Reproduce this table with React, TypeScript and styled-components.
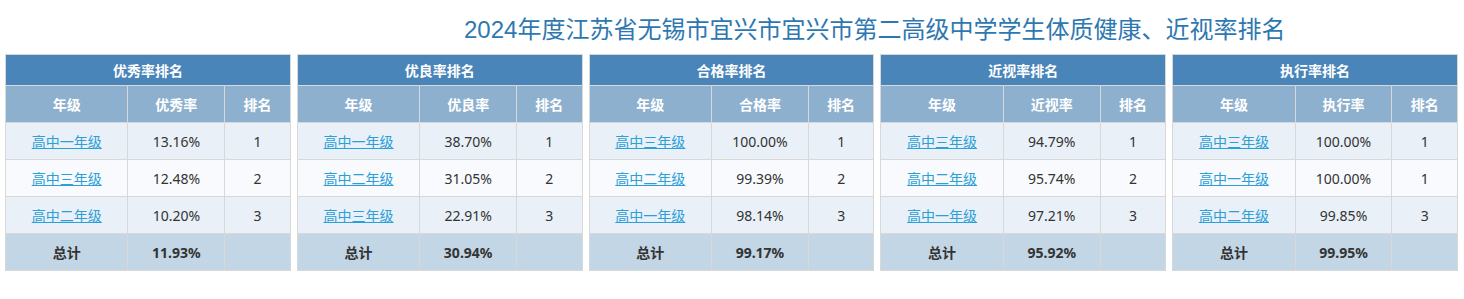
import React from "react";
import styled, { createGlobalStyle } from "styled-components";

type Row = { grade: string; rate: string; rank: string };
type Board = { title: string; rateLabel: string; rows: Row[]; total: string };

const boards: Board[] = [
  {
    title: "优秀率排名",
    rateLabel: "优秀率",
    rows: [
      { grade: "高中一年级", rate: "13.16%", rank: "1" },
      { grade: "高中三年级", rate: "12.48%", rank: "2" },
      { grade: "高中二年级", rate: "10.20%", rank: "3" },
    ],
    total: "11.93%",
  },
  {
    title: "优良率排名",
    rateLabel: "优良率",
    rows: [
      { grade: "高中一年级", rate: "38.70%", rank: "1" },
      { grade: "高中二年级", rate: "31.05%", rank: "2" },
      { grade: "高中三年级", rate: "22.91%", rank: "3" },
    ],
    total: "30.94%",
  },
  {
    title: "合格率排名",
    rateLabel: "合格率",
    rows: [
      { grade: "高中三年级", rate: "100.00%", rank: "1" },
      { grade: "高中二年级", rate: "99.39%", rank: "2" },
      { grade: "高中一年级", rate: "98.14%", rank: "3" },
    ],
    total: "99.17%",
  },
  {
    title: "近视率排名",
    rateLabel: "近视率",
    rows: [
      { grade: "高中三年级", rate: "94.79%", rank: "1" },
      { grade: "高中二年级", rate: "95.74%", rank: "2" },
      { grade: "高中一年级", rate: "97.21%", rank: "3" },
    ],
    total: "95.92%",
  },
  {
    title: "执行率排名",
    rateLabel: "执行率",
    rows: [
      { grade: "高中三年级", rate: "100.00%", rank: "1" },
      { grade: "高中一年级", rate: "100.00%", rank: "1" },
      { grade: "高中二年级", rate: "99.85%", rank: "3" },
    ],
    total: "99.95%",
  },
];

const App = () => {
  return (
    <Page>
      <GlobalStyle />
      <Heading>2024年度江苏省无锡市宜兴市宜兴市第二高级中学学生体质健康、近视率排名</Heading>
      <Boards>
        {boards.map((b) => (
          <Table key={b.title}>
            <colgroup>
              <col style={{ width: "43%" }} />
              <col style={{ width: "34%" }} />
              <col style={{ width: "23%" }} />
            </colgroup>
            <thead>
              <tr>
                <TitleCell colSpan={3}>{b.title}</TitleCell>
              </tr>
              <tr>
                <HeadCell>年级</HeadCell>
                <HeadCell>{b.rateLabel}</HeadCell>
                <HeadCell>排名</HeadCell>
              </tr>
            </thead>
            <tbody>
              {b.rows.map((r, i) => (
                <DataRow key={i} $odd={i % 2 === 0}>
                  <Cell>
                    <GradeLink href="#">{r.grade}</GradeLink>
                  </Cell>
                  <Cell>{r.rate}</Cell>
                  <Cell>{r.rank}</Cell>
                </DataRow>
              ))}
              <TotalRow>
                <TotalCell>总计</TotalCell>
                <TotalCell>{b.total}</TotalCell>
                <TotalCell />
              </TotalRow>
            </tbody>
          </Table>
        ))}
      </Boards>
    </Page>
  );
};

export default App;

const GlobalStyle = createGlobalStyle`
  body {
    margin: 0;
    background: #fff;
    font-family: "Noto Sans", "Noto Sans CJK SC", sans-serif;
  }
`;

const Page = styled.div`
  width: 1464px;
  height: 299px;
  box-sizing: border-box;
  padding-top: 15px;
`;

const Heading = styled.h1`
  margin: 0 0 9px 464px;
  height: 30px;
  line-height: 30px;
  font-family: "Liberation Sans", "Noto Sans CJK SC", sans-serif;
  font-size: 24px;
  font-weight: normal;
  color: #2e78b2;
  white-space: nowrap;
`;

const Boards = styled.div`
  display: flex;
  gap: 6px;
  padding: 0 6px 0 5px;
`;

const Table = styled.table`
  flex: 1;
  width: 286px;
  table-layout: fixed;
  border-collapse: collapse;
  border: 1px solid #d8d8d8;
  font-size: 14px;
  text-align: center;
`;

const TitleCell = styled.th`
  height: 30px;
  padding: 0;
  background: #4985b8;
  color: #fff;
  font-weight: bold;
  font-size: 14px;
  border: 1px solid #d8d8d8;
`;

const HeadCell = styled.th`
  height: 36px;
  padding: 0;
  background: #8db0cf;
  color: #fff;
  font-weight: bold;
  font-size: 14px;
  border: 1px solid #d8d8d8;
`;

const DataRow = styled.tr<{ $odd: boolean }>`
  background: ${(p) => (p.$odd ? "#e9f0f7" : "#f8fafd")};
`;

const Cell = styled.td`
  height: 36px;
  padding: 0;
  color: #333;
  font-size: 14px;
  border: 1px solid #d8d8d8;
`;

const GradeLink = styled.a`
  color: #2a9fd8;
  text-decoration: underline;
`;

const TotalRow = styled.tr`
  background: #c3d6e5;
`;

const TotalCell = styled.td`
  height: 36px;
  padding: 0;
  color: #333;
  font-weight: bold;
  font-size: 14px;
  border: 1px solid #d8d8d8;
`;
